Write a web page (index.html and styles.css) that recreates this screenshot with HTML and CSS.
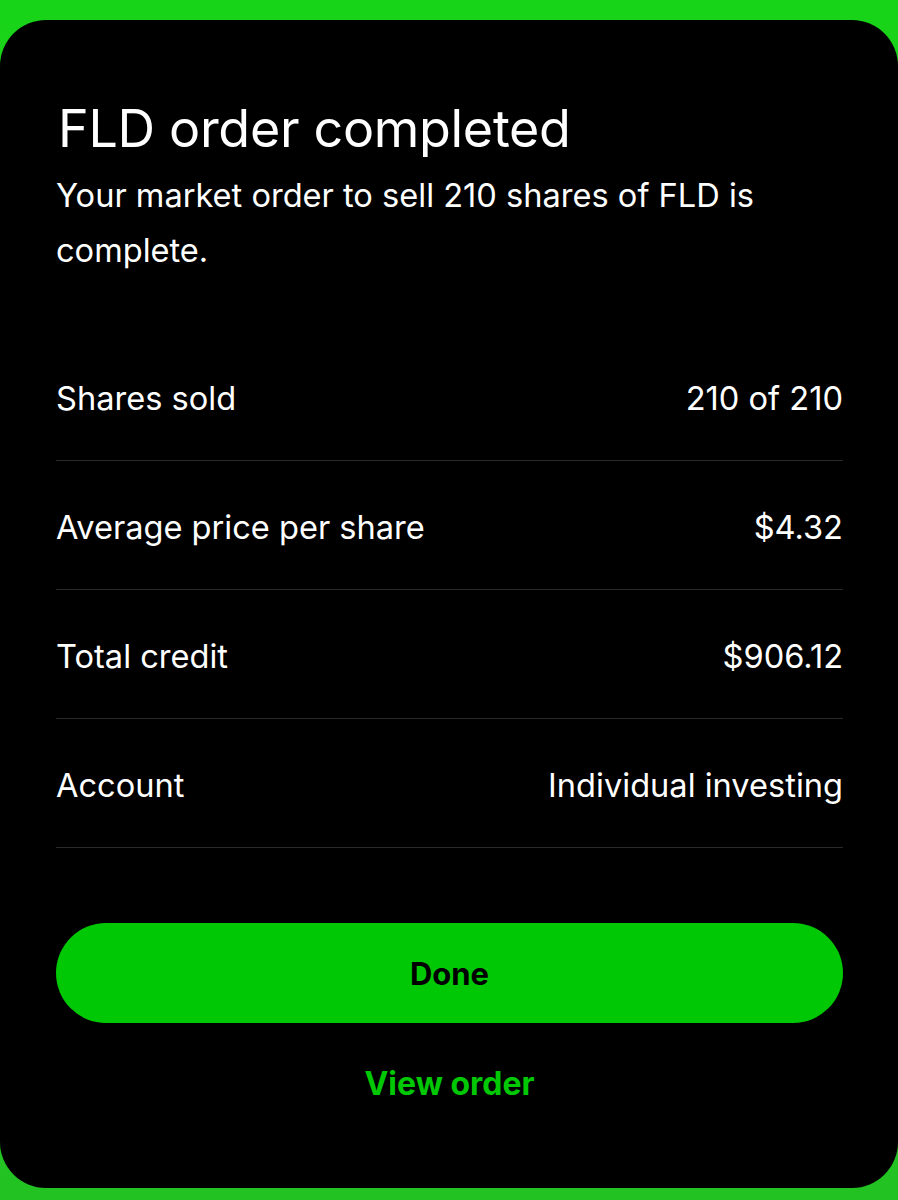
FILE: index.html
```html
<html>
  <head>
    <title>Order completed</title>
    <link rel="stylesheet" href="styles.css">
  </head>
  <body>
    <div class="card">
      <h1 class="title">FLD order completed</h1>
      <p class="subtitle">Your market order to sell 210 shares of FLD is complete.</p>

      <ul class="details">
        <li class="row"><span>Shares sold</span><span>210 of 210</span></li>
        <li class="row"><span>Average price per share</span><span>$4.32</span></li>
        <li class="row"><span>Total credit</span><span>$906.12</span></li>
        <li class="row"><span>Account</span><span>Individual investing</span></li>
      </ul>

      <button class="done">Done</button>
      <a class="viewOrder" href="#">View order</a>
    </div>
  </body>
</html>
```

FILE: styles.css
```css
body{
  margin:0;
  padding-top:20px;
  height:1200px;
  box-sizing:border-box;
  background:linear-gradient(180deg, #18d418 0%, #1fcb1f 50%, #22c222 100%);
  font-family:Inter, "Noto Sans", sans-serif;
  overflow:hidden;
}

.card{
  background:#000;
  color:#fff;
  height:1168px;
  border-radius:46px;
  box-sizing:border-box;
  padding:78px 55px 0 56px;
  display:flex;
  flex-direction:column;
}

.title{
  margin:0;
  font-size:52px;
  line-height:62px;
  font-weight:400;
  letter-spacing:-0.3px;
  padding-left:2px;
}

.subtitle{
  margin:8px 0 0 0;
  font-size:32.6px;
  line-height:55px;
  font-weight:400;
  max-width:740px;
}

.details{
  list-style:none;
  margin:54px 0 0 0;
  padding:0;
}

.row{
  display:flex;
  justify-content:space-between;
  align-items:center;
  border-bottom:1px solid #2a2a2a;
  font-size:32.6px;
  padding-top:4px;
  box-sizing:border-box;
  height:129px;
}

.done{
  margin-top:75px;
  height:100px;
  border:none;
  border-radius:50px;
  background:#00c805;
  color:#000;
  font-family:Inter, "Noto Sans", sans-serif;
  font-size:31px;
  font-weight:700;
}

.viewOrder{
  margin-top:41px;
  align-self:center;
  color:#00c805;
  font-size:32px;
  font-weight:700;
  line-height:40px;
  text-decoration:none;
}
```
